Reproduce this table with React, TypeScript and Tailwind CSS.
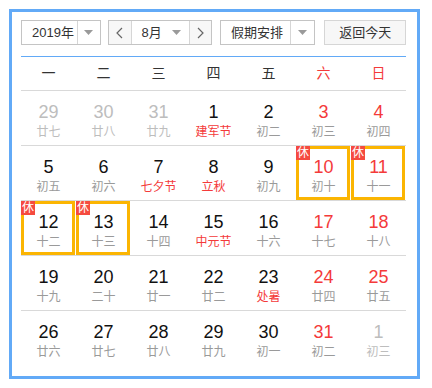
import React from "react";

type Day = { n: number; l: string; out?: boolean; redN?: boolean; redL?: boolean; hol?: boolean };

const rows: Day[][] = [
  [
    { n: 29, l: "廿七", out: true },
    { n: 30, l: "廿八", out: true },
    { n: 31, l: "廿九", out: true },
    { n: 1, l: "建军节", redL: true },
    { n: 2, l: "初二" },
    { n: 3, l: "初三", redN: true },
    { n: 4, l: "初四", redN: true },
  ],
  [
    { n: 5, l: "初五" },
    { n: 6, l: "初六" },
    { n: 7, l: "七夕节", redL: true },
    { n: 8, l: "立秋", redL: true },
    { n: 9, l: "初九" },
    { n: 10, l: "初十", redN: true, hol: true },
    { n: 11, l: "十一", redN: true, hol: true },
  ],
  [
    { n: 12, l: "十二", hol: true },
    { n: 13, l: "十三", hol: true },
    { n: 14, l: "十四" },
    { n: 15, l: "中元节", redL: true },
    { n: 16, l: "十六" },
    { n: 17, l: "十七", redN: true },
    { n: 18, l: "十八", redN: true },
  ],
  [
    { n: 19, l: "十九" },
    { n: 20, l: "二十" },
    { n: 21, l: "廿一" },
    { n: 22, l: "廿二" },
    { n: 23, l: "处暑", redL: true },
    { n: 24, l: "廿四", redN: true },
    { n: 25, l: "廿五", redN: true },
  ],
  [
    { n: 26, l: "廿六" },
    { n: 27, l: "廿七" },
    { n: 28, l: "廿八" },
    { n: 29, l: "廿九" },
    { n: 30, l: "初一" },
    { n: 31, l: "初二", redN: true },
    { n: 1, l: "初三", out: true },
  ],
];

const weekdays = ["一", "二", "三", "四", "五", "六", "日"];

function Caret() {
  return (
    <svg width="9" height="5" viewBox="0 0 9 5">
      <path d="M0 0 L9 0 L4.5 5 Z" fill="#9a9a9a" />
    </svg>
  );
}

function Chevron({ dir }: { dir: "l" | "r" }) {
  return (
    <svg width="7" height="12" viewBox="0 0 7 12">
      <path
        d={dir === "l" ? "M6 1 L1 6 L6 11" : "M1 1 L6 6 L1 11"}
        fill="none"
        stroke="#666"
        strokeWidth="1.2"
      />
    </svg>
  );
}

export default function App() {
  return (
    <div
      className="w-[432px] h-[388px] bg-white pt-[9px] pl-[9px] text-[#333]"
      style={{ fontFamily: '"Liberation Sans", "Noto Sans CJK SC", sans-serif' }}
    >
      <div className="w-[411px] h-[370px] border-[3px] border-[#62aaf7] pl-[9px] pr-[11px] pt-[8px]">
        {/* header controls */}
        <div className="flex h-[25px] text-[13px] whitespace-nowrap">
          <div className="w-[80px] flex border border-[#c4c4c4] bg-white">
            <div className="flex-1 flex items-center pl-[10px] overflow-hidden">2019年</div>
            <div className="w-[23px] shrink-0 border-l border-[#d6d6d6] flex items-center justify-center">
              <Caret />
            </div>
          </div>
          <div className="ml-[7px] w-[105px] flex border border-[#c4c4c4]">
            <div className="w-[23px] shrink-0 bg-[#f7f7f7] border-r border-[#d6d6d6] flex items-center justify-center">
              <Chevron dir="l" />
            </div>
            <div className="flex-1 flex items-center bg-white">
              <span className="ml-[10px]">8月</span>
              <span className="ml-auto mr-[8px] flex items-center">
                <Caret />
              </span>
            </div>
            <div className="w-[22px] shrink-0 bg-[#f7f7f7] border-l border-[#d6d6d6] flex items-center justify-center">
              <Chevron dir="r" />
            </div>
          </div>
          <div className="ml-[8px] w-[96px] flex border border-[#c4c4c4] bg-white">
            <div className="flex-1 flex items-center pl-[10px] overflow-hidden">假期安排</div>
            <div className="w-[24px] shrink-0 border-l border-[#d6d6d6] flex items-center justify-center">
              <Caret />
            </div>
          </div>
          <div className="ml-[9px] w-[82px] border border-[#d6d6d6] bg-[#f7f7f7] flex items-center justify-center">
            返回今天
          </div>
        </div>

        <div className="mt-[11px] h-px bg-[#62aaf7]" />

        {/* weekday header */}
        <div className="grid grid-cols-7 h-[34px] border-b border-[#d9d9d9] text-[14px]">
          {weekdays.map((w, i) => (
            <div
              key={w}
              className={`flex items-center justify-center ${i >= 5 ? "text-[#f43a3a]" : "text-[#333]"}`}
            >
              {w}
            </div>
          ))}
        </div>

        {rows.map((row, ri) => (
          <div
            key={ri}
            className={`grid grid-cols-7 h-[55px] ${ri < rows.length - 1 ? "border-b border-[#d9d9d9]" : ""}`}
          >
            {row.map((d, ci) => {
              const numColor = d.out ? "text-[#bdbdbd]" : d.redN ? "text-[#f43a3a]" : "text-[#111]";
              const lunColor = d.out ? "text-[#bdbdbd]" : d.redL ? "text-[#f43a3a]" : "text-[#9a9a9a]";
              return (
                <div key={ci} className="relative flex flex-col items-center pt-[10px]">
                  {d.hol && (
                    <div className="absolute top-0 left-0 right-[1px] bottom-0 border-[3px] border-[#fbb502]" />
                  )}
                  {d.hol && (
                    <div className="absolute top-0 left-0 w-[14px] h-[14px] bg-[#f54a3f] text-white text-[12px] leading-[14px] text-center">
                      休
                    </div>
                  )}
                  <div className={`text-[18px] leading-[22px] ${numColor}`}>{d.n}</div>
                  <div className={`text-[12px] leading-[16px] mt-[1px] ${lunColor}`}>{d.l}</div>
                </div>
              );
            })}
          </div>
        ))}
      </div>
    </div>
  );
}
